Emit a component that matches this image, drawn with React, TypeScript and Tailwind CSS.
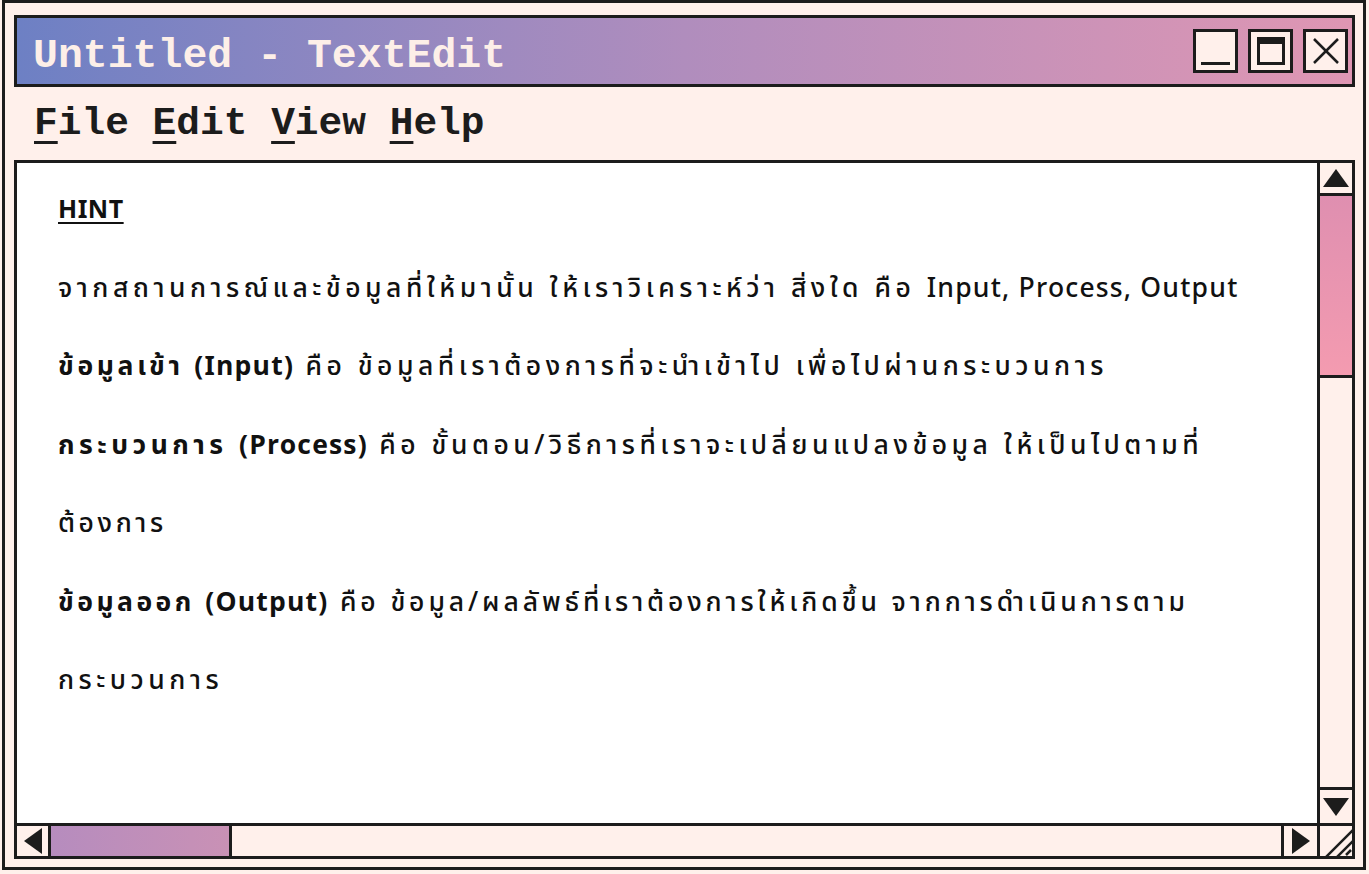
import React from "react";

const mono = { fontFamily: '"Liberation Mono", "Courier New", monospace' };
const thai = { fontFamily: '"Noto Sans Thai", "Noto Sans", "Loma", "Garuda", sans-serif' };

function L({ children }: { children: React.ReactNode }) {
  return <span className="tracking-[1.2px]">{children}</span>;
}

function TriUp() {
  return (
    <svg width="26" height="18" viewBox="0 0 26 18">
      <polygon points="13,0 26,18 0,18" fill="#1c1c1c" />
    </svg>
  );
}
function TriDown() {
  return (
    <svg width="26" height="18" viewBox="0 0 26 18">
      <polygon points="0,0 26,0 13,18" fill="#1c1c1c" />
    </svg>
  );
}
function TriLeft() {
  return (
    <svg width="18" height="26" viewBox="0 0 18 26">
      <polygon points="18,0 18,26 0,13" fill="#1c1c1c" />
    </svg>
  );
}
function TriRight() {
  return (
    <svg width="18" height="26" viewBox="0 0 18 26">
      <polygon points="0,0 18,13 0,26" fill="#1c1c1c" />
    </svg>
  );
}

function WinButton({ children }: { children: React.ReactNode }) {
  return (
    <div className="w-[45px] h-[44px] border-[3px] border-[#1c1c1c] bg-[#fff0eb] flex items-center justify-center">
      {children}
    </div>
  );
}

export default function App() {
  return (
    <div className="w-[1369px] h-[874px] bg-[#fff0eb] pl-[2px] pr-[3px] pb-[4px] overflow-hidden">
      <div className="h-full border-[3px] border-[#1c1c1c] bg-[#fff0eb] flex flex-col pl-[9px] pr-[8px] pt-[12px] pb-[8px]">
        {/* Title bar */}
        <div className="h-[72px] shrink-0 border-[3px] border-[#1c1c1c] bg-linear-to-r from-[#6d80c4] via-[#b08dbd] to-[#df96b3] flex items-center justify-between pl-[16px] pr-[4px]">
          <span className="text-[41.5px] font-bold text-[#fdefe8] leading-none mt-[9px]" style={mono}>
            Untitled - TextEdit
          </span>
          <div className="flex items-center gap-[10px]">
            <WinButton>
              <div className="w-[29px] h-[3px] bg-[#1c1c1c] mt-[24px]" />
            </WinButton>
            <WinButton>
              <div className="w-[28px] h-[28px] border-[3px] border-t-[7px] border-[#1c1c1c]" />
            </WinButton>
            <WinButton>
              <svg width="26" height="26" viewBox="0 0 26 26">
                <line x1="1" y1="1" x2="25" y2="25" stroke="#1c1c1c" strokeWidth="2.5" />
                <line x1="25" y1="1" x2="1" y2="25" stroke="#1c1c1c" strokeWidth="2.5" />
              </svg>
            </WinButton>
          </div>
        </div>

        {/* Menu bar */}
        <div className="h-[73px] shrink-0 flex items-center pl-[20px] text-[39.5px] font-bold text-[#1c1c1c] leading-none whitespace-pre" style={mono}>
          <span className="underline decoration-[3px] underline-offset-[7px]">F</span>ile{" "}
          <span className="underline decoration-[3px] underline-offset-[7px]">E</span>dit{" "}
          <span className="underline decoration-[3px] underline-offset-[7px]">V</span>iew{" "}
          <span className="underline decoration-[3px] underline-offset-[7px]">H</span>elp
        </div>

        {/* Content */}
        <div className="flex-1 border-[3px] border-[#1c1c1c] grid grid-cols-[1fr_35px] grid-rows-[1fr_33px] min-h-0">
          <div className="bg-white pl-[41px] pt-[8px] overflow-hidden text-[26.5px] tracking-[4.5px] leading-[78.5px] text-[#111] font-medium whitespace-nowrap" style={thai}>
            <div className="font-bold underline decoration-2 underline-offset-4 tracking-[0.5px] text-[25px]">HINT</div>
            <div>
              จากสถานการณ์และข้อมูลที่ให้มานั้น ให้เราวิเคราะห์ว่า สิ่งใด คือ <L>Input, Process, Output</L>
            </div>
            <div>
              <span className="font-bold tracking-[3.7px]">
                ข้อมูลเข้า <L>(Input)</L>
              </span>{" "}
              คือ ข้อมูลที่เราต้องการที่จะนำเข้าไป เพื่อไปผ่านกระบวนการ
            </div>
            <div>
              <span className="font-bold">
                กระบวนการ <L>(Process)</L>
              </span>{" "}
              คือ ขั้นตอน/วิธีการที่เราจะเปลี่ยนแปลงข้อมูล ให้เป็นไปตามที่
            </div>
            <div className="tracking-[3.6px]">ต้องการ</div>
            <div>
              <span className="font-bold tracking-[3.5px]">
                ข้อมูลออก <L>(Output)</L>
              </span>{" "}
              <span className="tracking-[3.9px]">คือ ข้อมูล/ผลลัพธ์ที่เราต้องการให้เกิดขึ้น จากการดำเนินการตาม</span>
            </div>
            <div>กระบวนการ</div>
          </div>

          {/* Vertical scrollbar */}
          <div className="border-l-[3px] border-[#1c1c1c] bg-[#fff0eb] flex flex-col">
            <div className="h-[33px] shrink-0 border-b-[3px] border-[#1c1c1c] flex items-center justify-center">
              <TriUp />
            </div>
            <div className="h-[182px] shrink-0 border-b-[3px] border-[#1c1c1c] bg-linear-to-b from-[#df8fb0] to-[#f49bb0]" />
            <div className="flex-1" />
            <div className="h-[36px] shrink-0 border-t-[3px] border-[#1c1c1c] flex items-center justify-center">
              <TriDown />
            </div>
          </div>

          {/* Horizontal scrollbar */}
          <div className="border-t-[3px] border-[#1c1c1c] bg-[#fff0eb] flex">
            <div className="w-[34px] shrink-0 border-r-[3px] border-[#1c1c1c] flex items-center justify-center">
              <TriLeft />
            </div>
            <div className="w-[181px] shrink-0 border-r-[3px] border-[#1c1c1c] bg-linear-to-r from-[#b68cbe] to-[#c991b5]" />
            <div className="flex-1" />
            <div className="w-[36px] shrink-0 border-l-[3px] border-[#1c1c1c] flex items-center justify-center">
              <TriRight />
            </div>
          </div>

          {/* Corner grip */}
          <div className="border-l-[3px] border-t-[3px] border-[#1c1c1c] bg-[#fff0eb] overflow-hidden">
            <svg width="32" height="30" viewBox="0 0 32 30">
              <line x1="6" y1="31" x2="33" y2="4" stroke="#1c1c1c" strokeWidth="2.5" />
              <line x1="17" y1="31" x2="33" y2="15" stroke="#1c1c1c" strokeWidth="2.5" />
              <line x1="26" y1="29" x2="31" y2="24" stroke="#1c1c1c" strokeWidth="2.5" />
            </svg>
          </div>
        </div>
      </div>
    </div>
  );
}
